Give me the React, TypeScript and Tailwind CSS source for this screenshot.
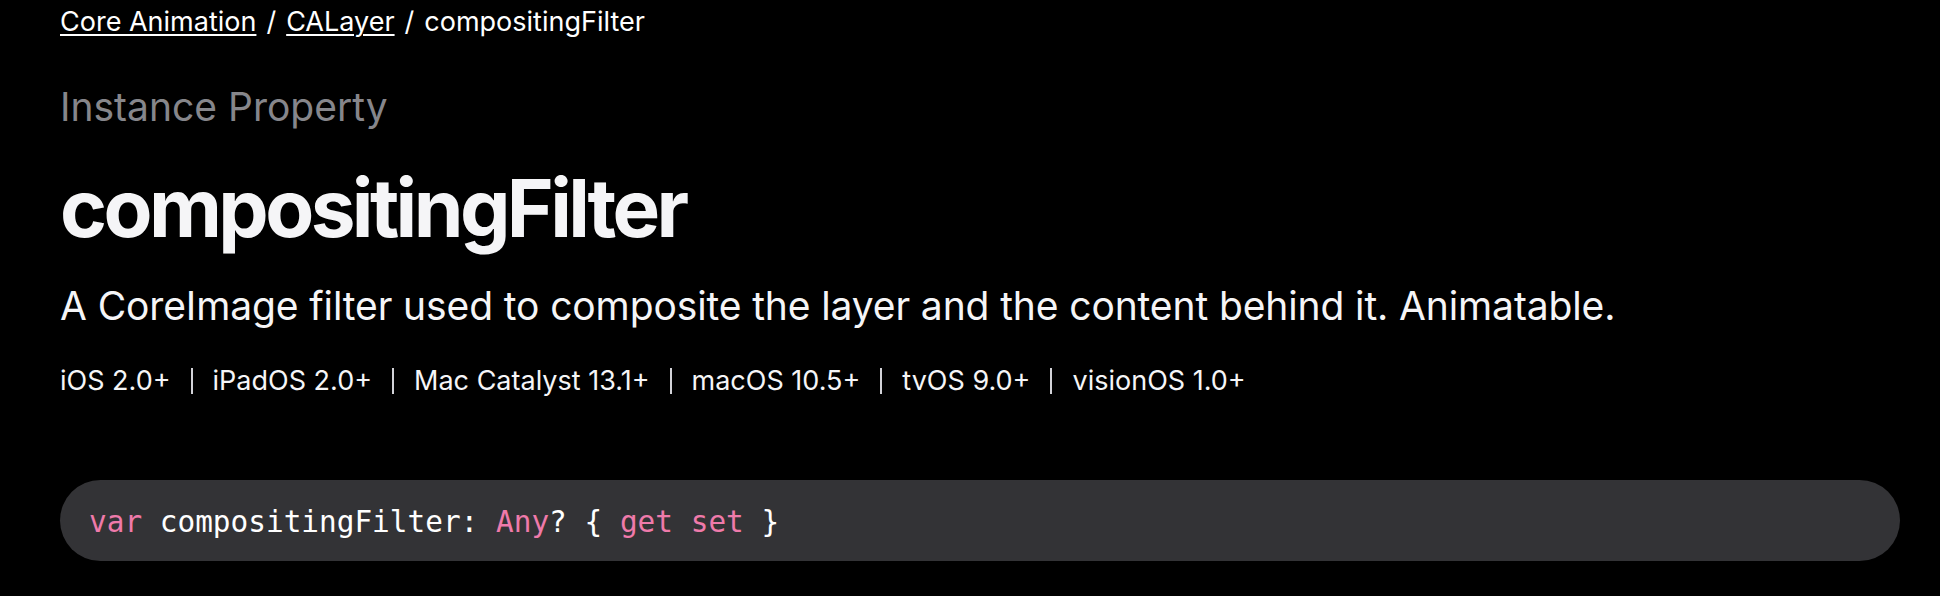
import React from "react";

const platforms = ["iOS 2.0+", "iPadOS 2.0+", "Mac Catalyst 13.1+", "macOS 10.5+", "tvOS 9.0+", "visionOS 1.0+"];

export default function App() {
  return (
    <div className="min-h-[596px] w-full bg-black text-[#f5f5f7] pl-[60px] pr-[40px] pt-[2px]" style={{ fontFamily: "Inter, 'Noto Sans', sans-serif" }}>
      <nav className="text-[27px] leading-[40px] flex items-center text-white">
        <a className="underline underline-offset-[3px] decoration-[2px]">Core Animation</a>
        <span className="mx-[10px]">/</span>
        <a className="underline underline-offset-[3px] decoration-[2px]">CALayer</a>
        <span className="mx-[10px]">/</span>
        <span>compositingFilter</span>
      </nav>
      <div className="mt-[41px] text-[39px] leading-[48px] text-[#86868b]">Instance Property</div>
      <h1 className="mt-[33px] text-[80px] leading-[88px] font-bold tracking-[-0.045em]">compositingFilter</h1>
      <p className="mt-[30px] text-[39px] leading-[48px] tracking-[-0.003em]">A CoreImage filter used to composite the layer and the content behind it. Animatable.</p>
      <ul className="mt-[31px] flex items-center text-[27px] leading-[40px] text-[#f5f5f7]">
        {platforms.map((p, i) => (
          <li key={p} className="flex items-center">
            {i > 0 && <span className="mx-[20px] h-[26px] w-[2px] bg-[#d2d2d7]" />}
            <span>{p}</span>
          </li>
        ))}
      </ul>
      <div className="mt-[79px] h-[81px] rounded-full bg-[#333336] flex items-center pl-[29px] pt-[2px]">
        <code className="text-[29.4px] leading-[40px] whitespace-pre text-white" style={{ fontFamily: "'DejaVu Sans Mono', monospace" }}>
          <span className="text-[#ef7aaa]">var</span> compositingFilter: <span className="text-[#ef7aaa]">Any</span>? {"{"} <span className="text-[#ef7aaa]">get</span> <span className="text-[#ef7aaa]">set</span> {"}"}
        </code>
      </div>
    </div>
  );
}
